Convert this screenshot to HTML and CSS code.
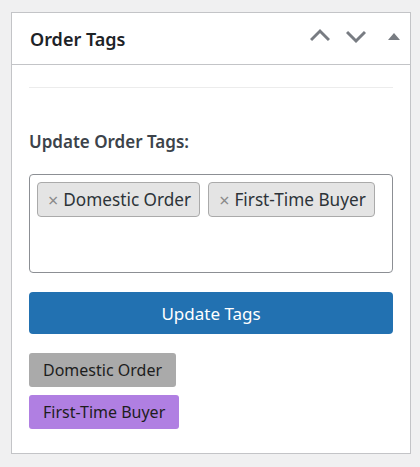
FILE: index.html
```html
<!DOCTYPE html>
<html>
<head>
<meta charset="utf-8">
<link rel="stylesheet" href="styles.css">
</head>
<body>
<div class="panel">
  <div class="panel-head">
    <h2 class="title">Order Tags</h2>
    <div class="actions">
      <svg class="icon" width="20" height="20" viewBox="0 0 20 20"><path d="M1 14 L10 5 L19 14" fill="none" stroke="#787c82" stroke-width="3"/></svg>
      <svg class="icon" width="20" height="20" viewBox="0 0 20 20"><path d="M1 6 L10 15 L19 6" fill="none" stroke="#787c82" stroke-width="3"/></svg>
      <svg class="icon tri" width="12" height="20" viewBox="0 0 12 20"><path d="M0 14 L6 7 L12 14 Z" fill="#787c82"/></svg>
    </div>
  </div>
  <div class="panel-body">
    <div class="sep"></div>
    <div class="label">Update Order Tags:</div>
    <div class="tagbox">
      <span class="chip"><span class="x">×</span>Domestic Order</span>
      <span class="chip"><span class="x">×</span>First-Time Buyer</span>
    </div>
    <button class="btn">Update Tags</button>
    <div class="badges">
      <span class="badge gray">Domestic Order</span>
      <span class="badge purple">First-Time Buyer</span>
    </div>
  </div>
</div>
</body>
</html>
```
FILE: styles.css
```css
html, body { margin: 0; padding: 0; }
body {
  background: #f0f0f1;
  font-family: "Noto Sans", "Open Sans", sans-serif;
  padding: 12px 10px 0 11px;
  width: 420px;
  height: 467px;
  box-sizing: border-box;
}
.panel {
  width: 400px;
  height: 442px;
  box-sizing: border-box;
  background: #fff;
  border: 1px solid #c3c4c7;
}
.panel-head {
  height: 52px;
  box-sizing: border-box;
  border-bottom: 1px solid #c3c4c7;
  display: flex;
  align-items: center;
  padding: 0 10px 0 18px;
}
.title {
  margin: 0;
  font-size: 18px;
  font-weight: 600;
  color: #1d2327;
  flex: 1;
}
.actions { display: flex; align-items: center; gap: 16px; margin-top: -6px; }
.icon { display: block; }
.tri { margin-left: 6px; }
.panel-body { padding: 0 17px; }
.sep { height: 1px; background: #ececec; margin-top: 22px; }
.label {
  margin-top: 43px;
  font-size: 17px;
  font-weight: 600;
  color: #3c434a;
  line-height: 22px;
}
.tagbox {
  margin-top: 21px;
  height: 99px;
  box-sizing: border-box;
  border: 1px solid #8c8f94;
  border-radius: 4px;
  padding: 7px 7px;
  display: flex;
  align-items: flex-start;
  gap: 8px;
}
.chip {
  display: inline-flex;
  align-items: center;
  height: 35px;
  box-sizing: border-box;
  padding: 0 8px 0 10px;
  background: #e4e4e4;
  border: 1px solid #aaa;
  border-radius: 4px;
  font-size: 17.2px;
  color: #2c3338;
}
.x { color: #8a8a8a; margin-right: 5px; font-size: 18px; }
.btn {
  display: block;
  width: 100%;
  height: 42px;
  margin-top: 19px;
  border: 0;
  border-radius: 4px;
  background: #2271b1;
  color: #fff;
  font-family: inherit;
  font-size: 17px;
}
.badges { margin-top: 19px; display: flex; flex-direction: column; align-items: flex-start; gap: 8px; }
.badge {
  display: inline-flex;
  align-items: center;
  height: 34px;
  padding: 0 14px;
  border-radius: 3px;
  font-size: 16px;
  color: #1d1d1d;
}
.gray { background: #aaaaaa; }
.purple { background: #b07fe2; }
```
